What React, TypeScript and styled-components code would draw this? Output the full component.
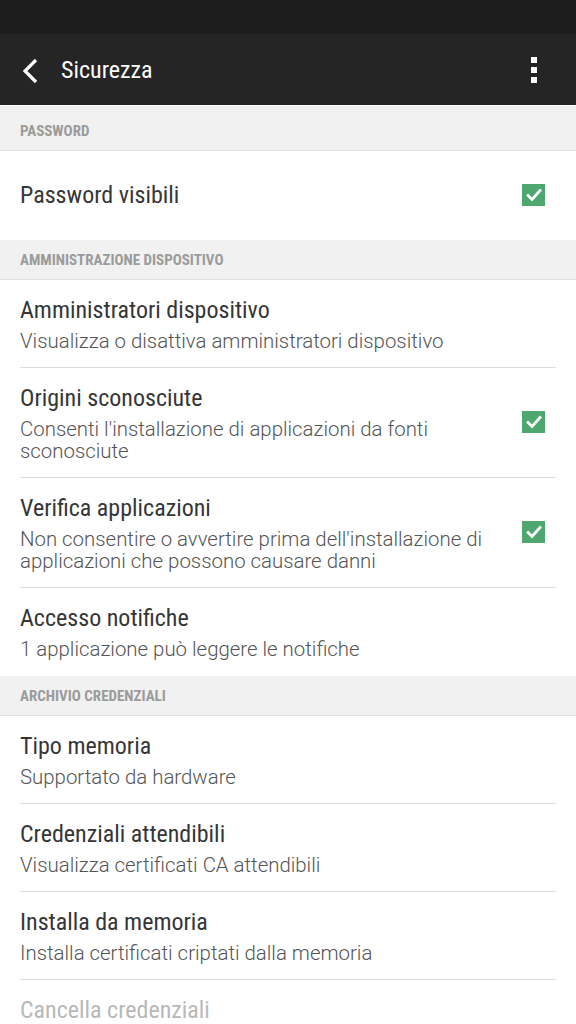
import styled, { createGlobalStyle } from "styled-components";

const GlobalStyle = createGlobalStyle`
  body {
    margin: 0;
    background: #ffffff;
    font-family: Roboto, "Liberation Sans", sans-serif;
  }
`;

type Item = {
  title: string;
  summary?: string;
  checked?: boolean;
  disabled?: boolean;
};

type Section = {
  header: string;
  items: Item[];
};

const sections: Section[] = [
  {
    header: "PASSWORD",
    items: [{ title: "Password visibili", checked: true }],
  },
  {
    header: "AMMINISTRAZIONE DISPOSITIVO",
    items: [
      {
        title: "Amministratori dispositivo",
        summary: "Visualizza o disattiva amministratori dispositivo",
      },
      {
        title: "Origini sconosciute",
        summary: "Consenti l'installazione di applicazioni da fonti sconosciute",
        checked: true,
      },
      {
        title: "Verifica applicazioni",
        summary:
          "Non consentire o avvertire prima dell'installazione di applicazioni che possono causare danni",
        checked: true,
      },
      {
        title: "Accesso notifiche",
        summary: "1 applicazione può leggere le notifiche",
      },
    ],
  },
  {
    header: "ARCHIVIO CREDENZIALI",
    items: [
      { title: "Tipo memoria", summary: "Supportato da hardware" },
      {
        title: "Credenziali attendibili",
        summary: "Visualizza certificati CA attendibili",
      },
      {
        title: "Installa da memoria",
        summary: "Installa certificati criptati dalla memoria",
      },
      { title: "Cancella credenziali", disabled: true },
    ],
  },
];

function Checkbox() {
  return (
    <CheckBox>
      <svg width="16" height="14" viewBox="0 0 16 14">
        <path
          d="M2 7.5 L6 11.5 L14 2.5"
          fill="none"
          stroke="#ffffff"
          strokeWidth="2.8"
          strokeLinecap="square"
        />
      </svg>
    </CheckBox>
  );
}

function App() {
  return (
    <Screen>
      <GlobalStyle />
      <StatusBar />
      <ActionBar>
        <BackButton>
          <svg width="18" height="26" viewBox="0 0 18 26">
            <path
              d="M14 2 L3 13 L14 24"
              fill="none"
              stroke="#ffffff"
              strokeWidth="3.2"
            />
          </svg>
        </BackButton>
        <Title>Sicurezza</Title>
        <MenuButton>
          <Dot />
          <Dot />
          <Dot />
        </MenuButton>
      </ActionBar>
      <List>
        {sections.map((section, si) => (
          <div key={section.header}>
            <Header first={si === 0}>{section.header}</Header>
            {section.items.map((item, i) => (
              <Row
                key={item.title}
                single={!item.summary && item.checked}
                divider={i < section.items.length - 1}
              >
                <Texts>
                  <ItemTitle disabled={item.disabled}>{item.title}</ItemTitle>
                  {item.summary && <Summary>{item.summary}</Summary>}
                </Texts>
                {item.checked && <Checkbox />}
              </Row>
            ))}
          </div>
        ))}
      </List>
    </Screen>
  );
}

export default App;

const Screen = styled.div`
  width: 576px;
  height: 1024px;
  overflow: hidden;
  background: #ffffff;
`;

const StatusBar = styled.div`
  height: 34px;
  background: #1d1d1d;
`;

const ActionBar = styled.div`
  height: 71px;
  background: #252525;
  display: flex;
  align-items: center;
  padding: 0 30px 0 22px;
  box-sizing: border-box;
`;

const BackButton = styled.div`
  width: 39px;
  display: flex;
  align-items: center;
  padding-top: 2px;
`;

const Title = styled.div`
  flex: 1;
  color: #ffffff;
  font-family: "Roboto Condensed", "Liberation Sans Narrow", Roboto, sans-serif;
  font-stretch: condensed;
  font-size: 24px;
`;

const MenuButton = styled.div`
  width: 24px;
  display: flex;
  flex-direction: column;
  align-items: center;
  gap: 4px;
`;

const Dot = styled.span`
  width: 6px;
  height: 6px;
  background: #ffffff;
`;

const List = styled.div`
  display: flex;
  flex-direction: column;
`;

const Header = styled.div<{ first?: boolean }>`
  height: ${(p) => (p.first ? "45px" : "40px")};
  margin-top: ${(p) => (p.first ? "1px" : "0")};
  background: #f0f1f0;
  border-bottom: 1px solid #dedede;
  box-sizing: border-box;
  display: flex;
  align-items: center;
  padding: 0 20px;
  padding-top: ${(p) => (p.first ? "6px" : "0")};
  color: #9b9b9b;
  font-family: "Roboto Condensed", "Liberation Sans Narrow", Roboto, sans-serif;
  font-stretch: condensed;
  font-weight: bold;
  font-size: 15px;
`;

const Row = styled.div<{ single?: boolean; divider?: boolean }>`
  margin: 0 20px;
  display: flex;
  align-items: center;
  gap: 20px;
  min-height: ${(p) => (p.single ? "89px" : "auto")};
  padding: ${(p) => (p.single ? "0" : "14px 0 15px")};
  border-bottom: 1px solid ${(p) => (p.divider ? "#dcdcdc" : "transparent")};
  box-sizing: border-box;
`;

const Texts = styled.div`
  flex: 1;
  display: flex;
  flex-direction: column;
`;

const ItemTitle = styled.div<{ disabled?: boolean }>`
  color: ${(p) => (p.disabled ? "#b8b8b8" : "#363636")};
  font-family: "Roboto Condensed", "Liberation Sans Narrow", Roboto, sans-serif;
  font-stretch: condensed;
  font-size: 24px;
  line-height: 32px;
`;

const Summary = styled.div`
  margin-top: 4px;
  color: #555555;
  font-family: Roboto, sans-serif;
  font-weight: 300;
  font-size: 20.4px;
  line-height: 22px;
`;

const CheckBox = styled.div`
  width: 23px;
  height: 22px;
  flex-shrink: 0;
  background: #4ea76e;
  display: flex;
  align-items: center;
  justify-content: center;
  margin-right: 11px;
`;
